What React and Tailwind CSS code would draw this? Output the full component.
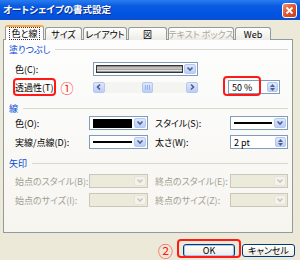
import React from "react";

const Chev = ({ dir = "down", color = "#4d6185" }) => {
  const paths = {
    down: "M1.5 2.5 L4 5 L6.5 2.5",
    up: "M1.5 5 L4 2.5 L6.5 5",
    left: "M5 1.5 L2.5 4 L5 6.5",
    right: "M3 1.5 L5.5 4 L3 6.5",
  };
  return (
    <svg width="8" height="8" viewBox="0 0 8 8">
      <path d={paths[dir]} fill="none" stroke={color} strokeWidth="1.6" />
    </svg>
  );
};

const ArrowBtn = ({ dir = "down", disabled = false }) => (
  <div
    className={
      disabled
        ? "flex h-full w-[12px] items-center justify-center rounded-[2px] border border-[#e6e4d8] bg-[#f3f2ec]"
        : "flex h-full w-[12px] items-center justify-center rounded-[2px] border border-[#b4c6f2] bg-[linear-gradient(180deg,#dde7fe,#bccdf8)]"
    }
  >
    <Chev dir={dir} color={disabled ? "#c9c7ba" : "#4d6185"} />
  </div>
);

const Combo = ({ children, w, disabled = false }) => (
  <div
    className={
      (disabled
        ? "border-[#c9c7ba] bg-[#ebeadb] "
        : "border-[#7f9db9] bg-white ") +
      "flex h-[14px] shrink-0 items-stretch border p-[1px] " +
      w
    }
  >
    <div className="flex flex-1 items-center px-[2px]">{children}</div>
    <ArrowBtn disabled={disabled} />
  </div>
);

const Spin = ({ value, w }) => (
  <div className={"flex h-[14px] shrink-0 items-stretch border border-[#7f9db9] bg-white p-[1px] " + w}>
    <div className="flex flex-1 items-center whitespace-nowrap pl-[2px] text-[9px] leading-none text-black">{value}</div>
    <div className="flex w-[11px] flex-col items-center justify-center gap-[1px] rounded-[2px] border border-[#b4c6f2] bg-[linear-gradient(180deg,#dde7fe,#bccdf8)]">
      <svg width="5" height="3" viewBox="0 0 5 3"><path d="M0 3 L2.5 0 L5 3 Z" fill="#4d6185" /></svg>
      <svg width="5" height="3" viewBox="0 0 5 3"><path d="M0 0 L2.5 3 L5 0 Z" fill="#4d6185" /></svg>
    </div>
  </div>
);

const Heading = ({ children }) => (
  <div className="flex h-[12px] items-center gap-[5px]">
    <span className="whitespace-nowrap text-[9px] leading-none text-[#0046d5]">{children}</span>
    <div className="h-px flex-1 bg-[#d9d8cd]" />
  </div>
);

const Label = ({ children, w, disabled = false }) => (
  <div className={"shrink-0 whitespace-nowrap text-[9px] leading-none " + (disabled ? "text-[#a1a192] " : "text-black ") + w}>
    {children}
  </div>
);

const LineSample = () => <div className="h-[2px] w-full bg-black" />;

const Tab = ({ children, selected, disabled, w }) => (
  <div
    className={
      selected
        ? "relative z-10 flex h-[15px] items-center justify-center rounded-t-[3px] border-x border-[#919b9c] border-t-[2px] border-t-[#ffa53c] bg-[#fcfcfe] " + w
        : "flex h-[13px] items-center justify-center rounded-t-[3px] border border-b-0 border-[#919b9c] bg-[linear-gradient(180deg,#ffffff,#ecebe5)] " + w
    }
  >
    <span
      className={
        (selected ? "border border-dotted border-[#333] px-[2px] py-px " : "") +
        "whitespace-nowrap text-[9px] leading-none " +
        (disabled ? "text-[#aca899]" : "text-black")
      }
    >
      {children}
    </span>
  </div>
);

export default function App() {
  return (
    <div className="relative h-[260px] w-[300px] overflow-hidden bg-[#ece9d8] font-['Noto_Sans_CJK_JP','Noto_Sans',sans-serif] [font-feature-settings:'palt']">
      {/* title bar */}
      <div className="flex h-[20px] items-center justify-between bg-[linear-gradient(180deg,#2a7cf0,#0a5be0_30%,#0054e3_70%,#0a4fd0)] pl-[3px] pr-[3px]">
        <span className="whitespace-nowrap text-[9.5px] font-bold leading-none text-white [text-shadow:1px_1px_#0a2a8c]">
          オートシェイプの書式設定
        </span>
        <div className="flex h-[15px] w-[15px] items-center justify-center rounded-[3px] border border-white bg-[linear-gradient(135deg,#ee9275,#e0552f_50%,#c33d17)]">
          <svg width="9" height="9" viewBox="0 0 9 9">
            <path d="M1.5 1.5 L7.5 7.5 M7.5 1.5 L1.5 7.5" stroke="white" strokeWidth="1.8" />
          </svg>
        </div>
      </div>

      {/* tabs */}
      <div className="ml-[5px] mt-[5px] flex h-[15px] items-end gap-[1px]">
        <Tab selected w="w-[39px]">色と線</Tab>
        <Tab w="w-[37px]">サイズ</Tab>
        <Tab w="w-[44px]">レイアウト</Tab>
        <Tab w="w-[39px]">図</Tab>
        <Tab disabled w="w-[66px]">テキスト ボックス</Tab>
        <Tab w="w-[36px]">Web</Tab>
      </div>

      {/* panel */}
      <div className="-mt-[1px] ml-[3px] h-[194px] w-[290px] border border-[#919b9c] bg-[linear-gradient(180deg,#fdfdfd,#f6f5f0)] pl-[5px] pr-[4px] pt-[3px]">
        <Heading>塗りつぶし</Heading>

        <div className="mt-[7px] flex h-[14px] items-center pl-[6px]">
          <Label w="w-[78px]">色(C):</Label>
          <div className="flex h-[14px] w-[105px] shrink-0 items-stretch border border-[#7f9db9] bg-white p-[1px]">
            <div className="flex flex-1 items-stretch p-[1px]">
              <div className="flex-1 border border-[#333] bg-[linear-gradient(180deg,#7a7a7a,#d8d8d8_35%,#9a9a9a_55%,#e2e2e2_75%,#6e6e6e)]" />
            </div>
            <ArrowBtn />
          </div>
        </div>

        <div className="mt-[4px] flex h-[14px] items-center pl-[6px]">
          <div className="flex w-[78px] shrink-0 items-center">
            <span className="whitespace-nowrap text-[9px] leading-none text-black">透過性(T)</span>
            <span className="ml-[7px] text-[13px] leading-none text-[#ff1a1a]">①</span>
          </div>
          <div className="flex h-[11px] w-[105px] shrink-0 items-stretch">
            <ArrowBtn dir="left" />
            <div className="flex flex-1 items-stretch bg-[#f4f4f0] pl-[37px]">
              <div className="flex w-[11px] items-center justify-center gap-[1px] rounded-[2px] border border-[#b4c6f2] bg-[linear-gradient(180deg,#dde7fe,#bccdf8)]">
                <div className="h-[5px] w-px bg-[#9bb0e6]" />
                <div className="h-[5px] w-px bg-[#9bb0e6]" />
                <div className="h-[5px] w-px bg-[#9bb0e6]" />
              </div>
            </div>
            <ArrowBtn dir="right" />
          </div>
          <div className="ml-[30px]">
            <Spin value="50 %" w="w-[52px]" />
          </div>
        </div>

        <div className="mt-[8px]">
          <Heading>線</Heading>
        </div>

        <div className="mt-[2px] flex h-[14px] items-center pl-[6px]">
          <Label w="w-[74px]">色(O):</Label>
          <Combo w="w-[59px]">
            <div className="h-[9px] w-full bg-black" />
          </Combo>
          <Label w="ml-[7px] w-[75px]">スタイル(S):</Label>
          <Combo w="w-[58px]">
            <LineSample />
          </Combo>
        </div>

        <div className="mt-[5px] flex h-[14px] items-center pl-[6px]">
          <Label w="w-[74px]">実線/点線(D):</Label>
          <Combo w="w-[59px]">
            <LineSample />
          </Combo>
          <Label w="ml-[7px] w-[75px]">太さ(W):</Label>
          <Spin value="2 pt" w="w-[58px]" />
        </div>

        <div className="mt-[8px]">
          <Heading>矢印</Heading>
        </div>

        <div className="mt-[5px] flex h-[14px] items-center pl-[6px]">
          <Label disabled w="w-[74px]">始点のスタイル(B):</Label>
          <Combo disabled w="w-[59px]" />
          <Label disabled w="ml-[7px] w-[75px]">終点のスタイル(E):</Label>
          <Combo disabled w="w-[58px]" />
        </div>

        <div className="mt-[5px] flex h-[14px] items-center pl-[6px]">
          <Label disabled w="w-[74px]">始点のサイズ(I):</Label>
          <Combo disabled w="w-[59px]" />
          <Label disabled w="ml-[7px] w-[75px]">終点のサイズ(Z):</Label>
          <Combo disabled w="w-[58px]" />
        </div>
      </div>

      {/* buttons */}
      <div className="mt-[10px] flex items-center justify-end pr-[5px]">
        <span className="mr-[10px] text-[15px] leading-none text-[#ff1a1a]">②</span>
        <button className="flex h-[13px] w-[52px] items-center justify-center rounded-[3px] border border-[#003c74] bg-[linear-gradient(180deg,#ffffff,#ecebe6)] text-[9px] leading-none text-black shadow-[inset_0_0_0_1px_#a9c5f3]">
          OK
        </button>
        <button className="ml-[7px] flex h-[13px] w-[53px] items-center justify-center rounded-[3px] border border-[#003c74] bg-[linear-gradient(180deg,#ffffff,#ecebe6)] text-[9px] leading-none text-black">
          キャンセル
        </button>
      </div>

      {/* annotation boxes */}
      <div className="absolute left-[13px] top-[78px] h-[18px] w-[43px] rounded-[4px] border-2 border-[#ff1a1a]" />
      <div className="absolute left-[223px] top-[76px] h-[20px] w-[38px] rounded-[4px] border-2 border-[#ff1a1a]" />
      <div className="absolute left-[177px] top-[239px] h-[19px] w-[64px] rounded-[4px] border-2 border-[#ff1a1a]" />
    </div>
  );
}
